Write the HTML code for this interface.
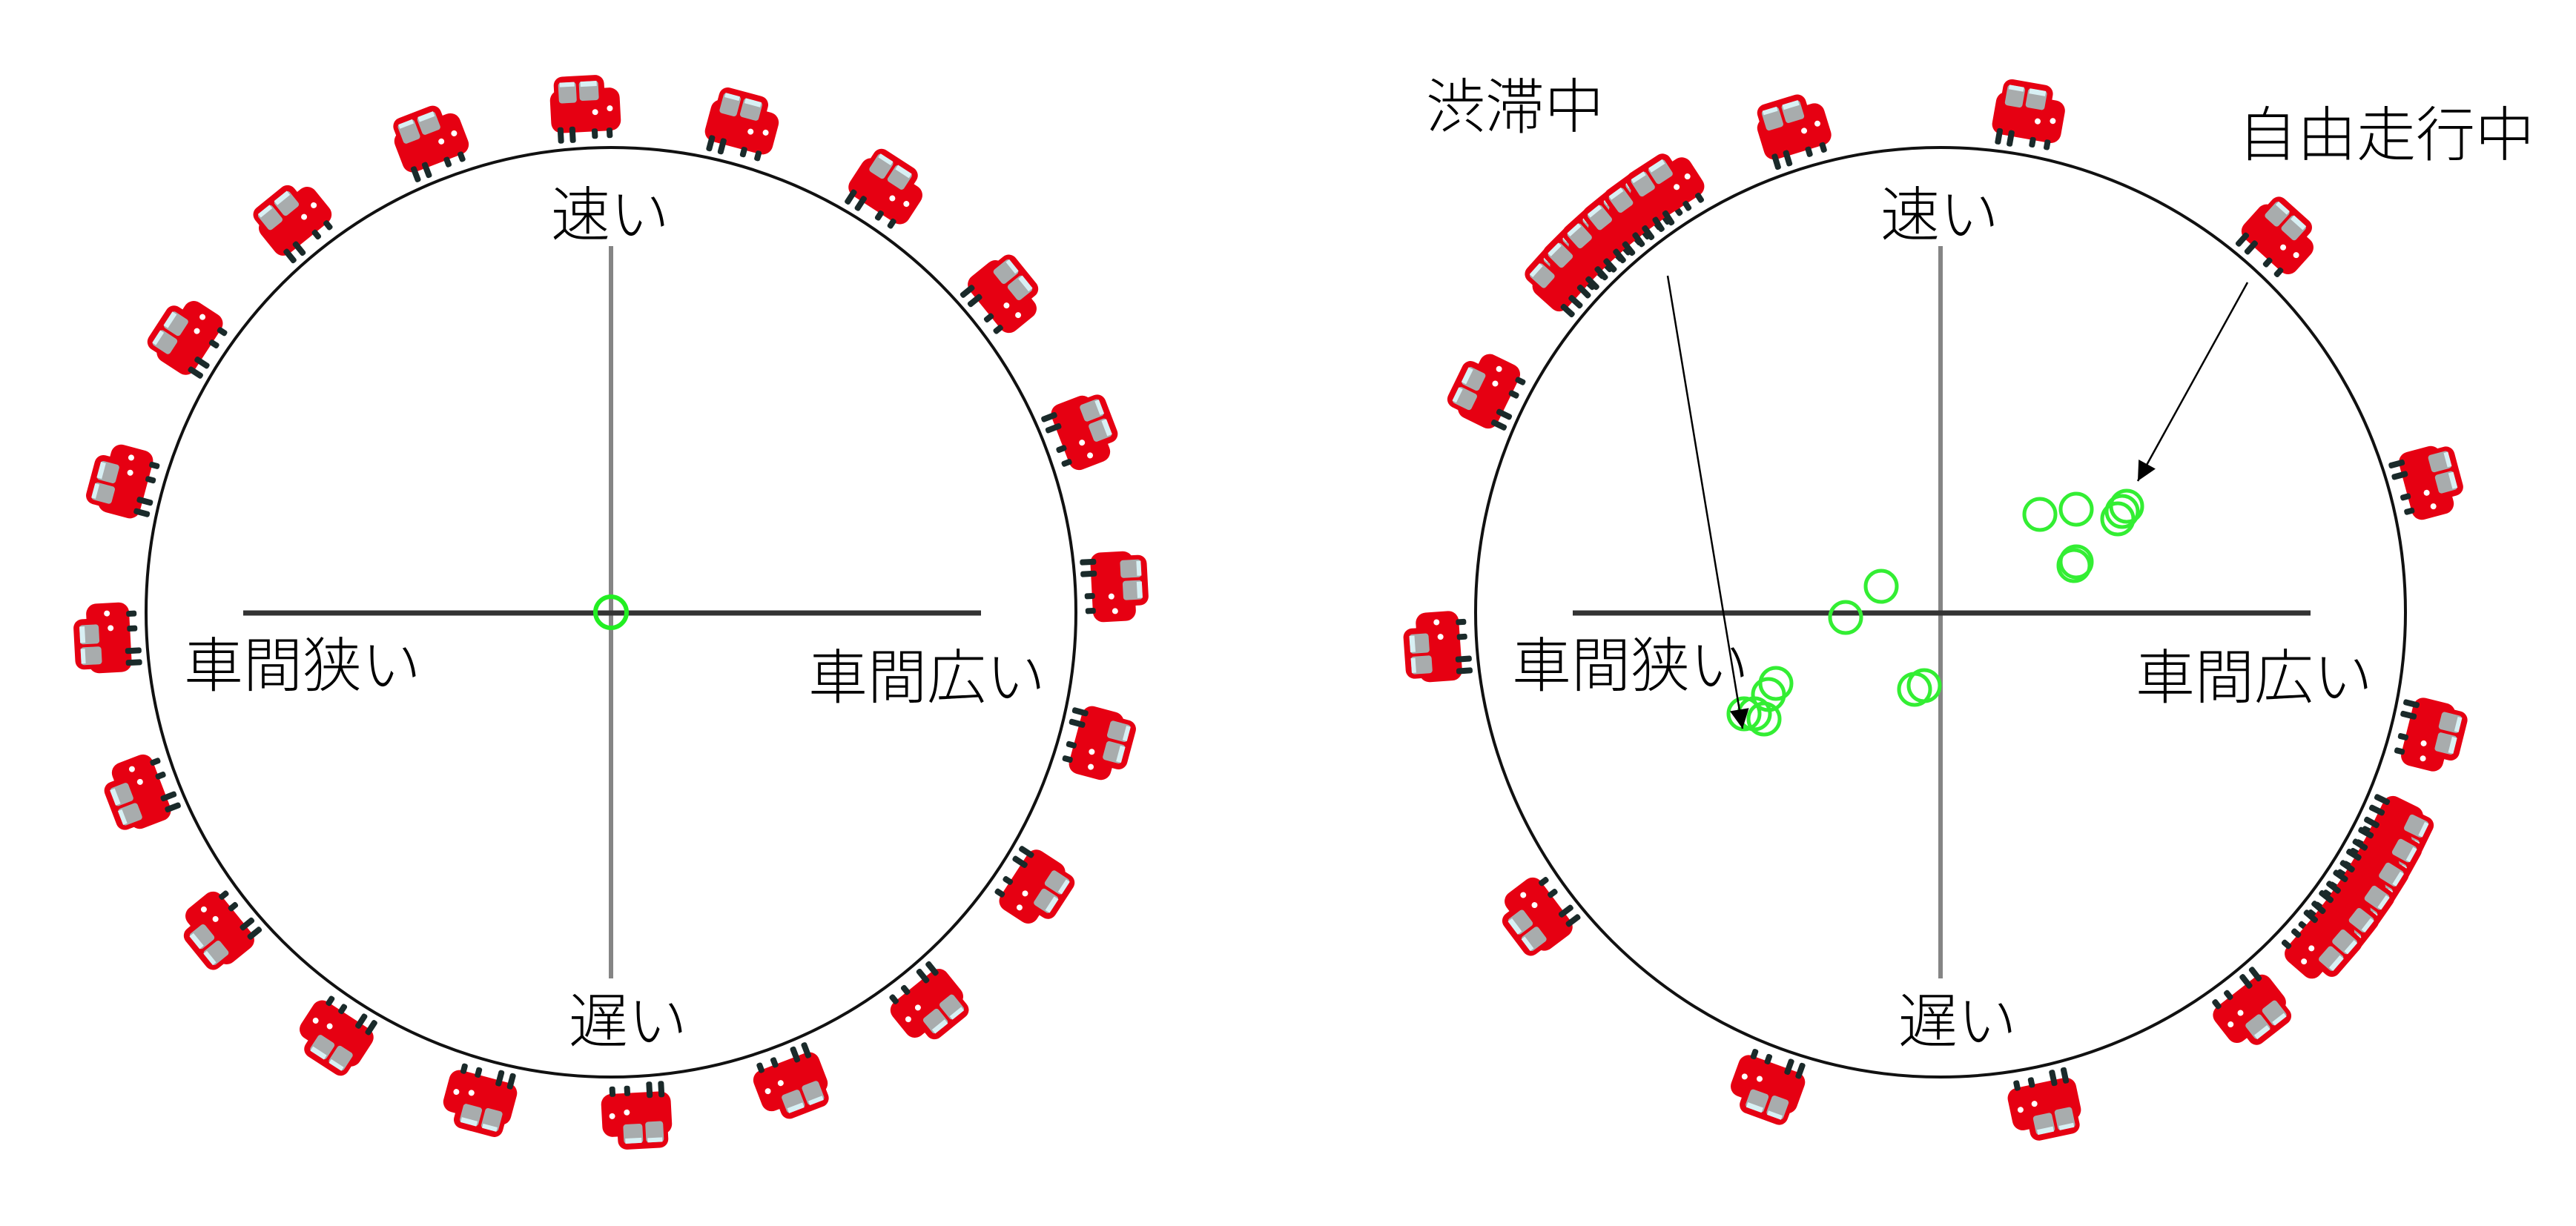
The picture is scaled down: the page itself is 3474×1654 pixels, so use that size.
<!DOCTYPE html>
<html><head><meta charset="utf-8">
<style>
html,body{margin:0;padding:0;background:#fff;}
svg{display:block;}
text{font-family:"Liberation Sans","Noto Sans CJK JP",sans-serif;font-size:80px;font-weight:300;fill:#000;}
</style></head>
<body>
<svg width="3474" height="1654" viewBox="0 0 3474 1654" xmlns="http://www.w3.org/2000/svg">
<defs>
<g id="car">
  <rect x="-46" y="-72" width="94" height="58" rx="14" fill="#e60012"/>
  <rect x="-40" y="-90" width="68" height="40" rx="12" fill="#e60012"/>
  <rect x="-34" y="-82" width="24" height="28" rx="4" fill="#a8acad"/>
  <rect x="-6" y="-82" width="26" height="26" rx="4" fill="#a8acad"/>
  <rect x="-4" y="-82" width="22" height="7" fill="#d8f0f4"/>
  <rect x="-32" y="-82" width="20" height="6" fill="#d8f0f4"/>
  <circle cx="34" cy="-44" r="4" fill="#fff"/>
  <circle cx="14" cy="-40" r="4" fill="#fff"/>
  <rect x="-38" y="-22" width="8" height="22" rx="3" fill="#1a2a2a"/>
  <rect x="-22" y="-22" width="8" height="22" rx="3" fill="#1a2a2a"/>
  <rect x="8" y="-18" width="8" height="14" rx="3" fill="#1a2a2a"/>
  <rect x="28" y="-18" width="8" height="14" rx="3" fill="#1a2a2a"/>
</g>
<marker id="ah" viewBox="0 0 10 10" refX="10" refY="5" markerWidth="32" markerHeight="26" markerUnits="userSpaceOnUse" orient="auto">
  <path d="M0,0 L10,5 L0,10 z" fill="#000"/>
</marker>
</defs>

<!-- LEFT PANEL -->
<g transform="translate(824,826)">
  <g>
    <use href="#car" transform="rotate(-3) translate(0,-635)"/>
    <use href="#car" transform="rotate(15) translate(0,-635)"/>
    <use href="#car" transform="rotate(33) translate(0,-635)"/>
    <use href="#car" transform="rotate(51) translate(0,-635)"/>
    <use href="#car" transform="rotate(69) translate(0,-635)"/>
    <use href="#car" transform="rotate(87) translate(0,-635)"/>
    <use href="#car" transform="rotate(105) translate(0,-635)"/>
    <use href="#car" transform="rotate(123) translate(0,-635)"/>
    <use href="#car" transform="rotate(141) translate(0,-635)"/>
    <use href="#car" transform="rotate(159) translate(0,-635)"/>
    <use href="#car" transform="rotate(177) translate(0,-635)"/>
    <use href="#car" transform="rotate(195) translate(0,-635)"/>
    <use href="#car" transform="rotate(213) translate(0,-635)"/>
    <use href="#car" transform="rotate(231) translate(0,-635)"/>
    <use href="#car" transform="rotate(249) translate(0,-635)"/>
    <use href="#car" transform="rotate(267) translate(0,-635)"/>
    <use href="#car" transform="rotate(285) translate(0,-635)"/>
    <use href="#car" transform="rotate(303) translate(0,-635)"/>
    <use href="#car" transform="rotate(321) translate(0,-635)"/>
    <use href="#car" transform="rotate(339) translate(0,-635)"/>
  </g>
  <circle cx="0" cy="0" r="627" fill="none" stroke="#111" stroke-width="4"/>
  <line x1="0" y1="-494" x2="0" y2="494" stroke="#858585" stroke-width="6"/>
  <line x1="-496" y1="1" x2="499" y2="1" stroke="#333" stroke-width="7"/>
  <circle cx="0" cy="0" r="21" fill="none" stroke="#22ee22" stroke-width="6"/>
</g>
<text x="743" y="318">速い</text>
<text x="248" y="926">車間狭い</text>
<text x="767" y="1406">遅い</text>
<text x="1090" y="942">車間広い</text>

<!-- RIGHT PANEL -->
<g transform="translate(2617,826)">
  <g>
    <use href="#car" transform="rotate(-17) translate(0,-635)"/>
    <use href="#car" transform="rotate(10) translate(0,-635)"/>
    <use href="#car" transform="rotate(42) translate(0,-635)"/>
    <use href="#car" transform="rotate(75) translate(0,-635)"/>
    <use href="#car" transform="rotate(104) translate(0,-635)"/>
    <use href="#car" transform="rotate(116) translate(0,-635)"/>
    <use href="#car" transform="rotate(119) translate(0,-635)"/>
    <use href="#car" transform="rotate(122) translate(0,-635)"/>
    <use href="#car" transform="rotate(125) translate(0,-635)"/>
    <use href="#car" transform="rotate(128) translate(0,-635)"/>
    <use href="#car" transform="rotate(131) translate(0,-635)"/>
    <use href="#car" transform="rotate(142) translate(0,-635)"/>
    <use href="#car" transform="rotate(168) translate(0,-635)"/>
    <use href="#car" transform="rotate(200) translate(0,-635)"/>
    <use href="#car" transform="rotate(233) translate(0,-635)"/>
    <use href="#car" transform="rotate(266) translate(0,-635)"/>
    <use href="#car" transform="rotate(296) translate(0,-635)"/>
    <use href="#car" transform="rotate(312) translate(0,-635)"/>
    <use href="#car" transform="rotate(315) translate(0,-635)"/>
    <use href="#car" transform="rotate(318) translate(0,-635)"/>
    <use href="#car" transform="rotate(321) translate(0,-635)"/>
    <use href="#car" transform="rotate(324) translate(0,-635)"/>
    <use href="#car" transform="rotate(327) translate(0,-635)"/>
  </g>
  <circle cx="0" cy="0" r="627" fill="none" stroke="#111" stroke-width="4"/>
  <line x1="0" y1="-494" x2="0" y2="494" stroke="#858585" stroke-width="6"/>
  <line x1="-496" y1="1" x2="499" y2="1" stroke="#333" stroke-width="7"/>
</g>
<g fill="none" stroke="#33ee33" stroke-width="5">
  <circle cx="2751" cy="694" r="21"/>
  <circle cx="2800" cy="687" r="21"/>
  <circle cx="2868" cy="683" r="21"/>
  <circle cx="2862" cy="690" r="21"/>
  <circle cx="2856" cy="700" r="21"/>
  <circle cx="2797" cy="763" r="21"/>
  <circle cx="2800" cy="758" r="21"/>
  <circle cx="2537" cy="791" r="21"/>
  <circle cx="2489" cy="833" r="21"/>
  <circle cx="2395" cy="922" r="21"/>
  <circle cx="2385" cy="937" r="21"/>
  <circle cx="2366" cy="963" r="21"/>
  <circle cx="2379" cy="970" r="21"/>
  <circle cx="2352" cy="963" r="21"/>
  <circle cx="2582" cy="930" r="21"/>
  <circle cx="2595" cy="925" r="21"/>
</g>
<line x1="2249" y1="372" x2="2350" y2="983" stroke="#000" stroke-width="2.5" marker-end="url(#ah)"/>
<line x1="3031" y1="381" x2="2883" y2="649" stroke="#000" stroke-width="2.5" marker-end="url(#ah)"/>
<text x="2536" y="318">速い</text>
<text x="2039" y="926">車間狭い</text>
<text x="2560" y="1406">遅い</text>
<text x="2880" y="942">車間広い</text>
<text x="1923" y="172">渋滞中</text>
<text x="3018" y="210">自由走行中</text>
</svg>
</body></html>
